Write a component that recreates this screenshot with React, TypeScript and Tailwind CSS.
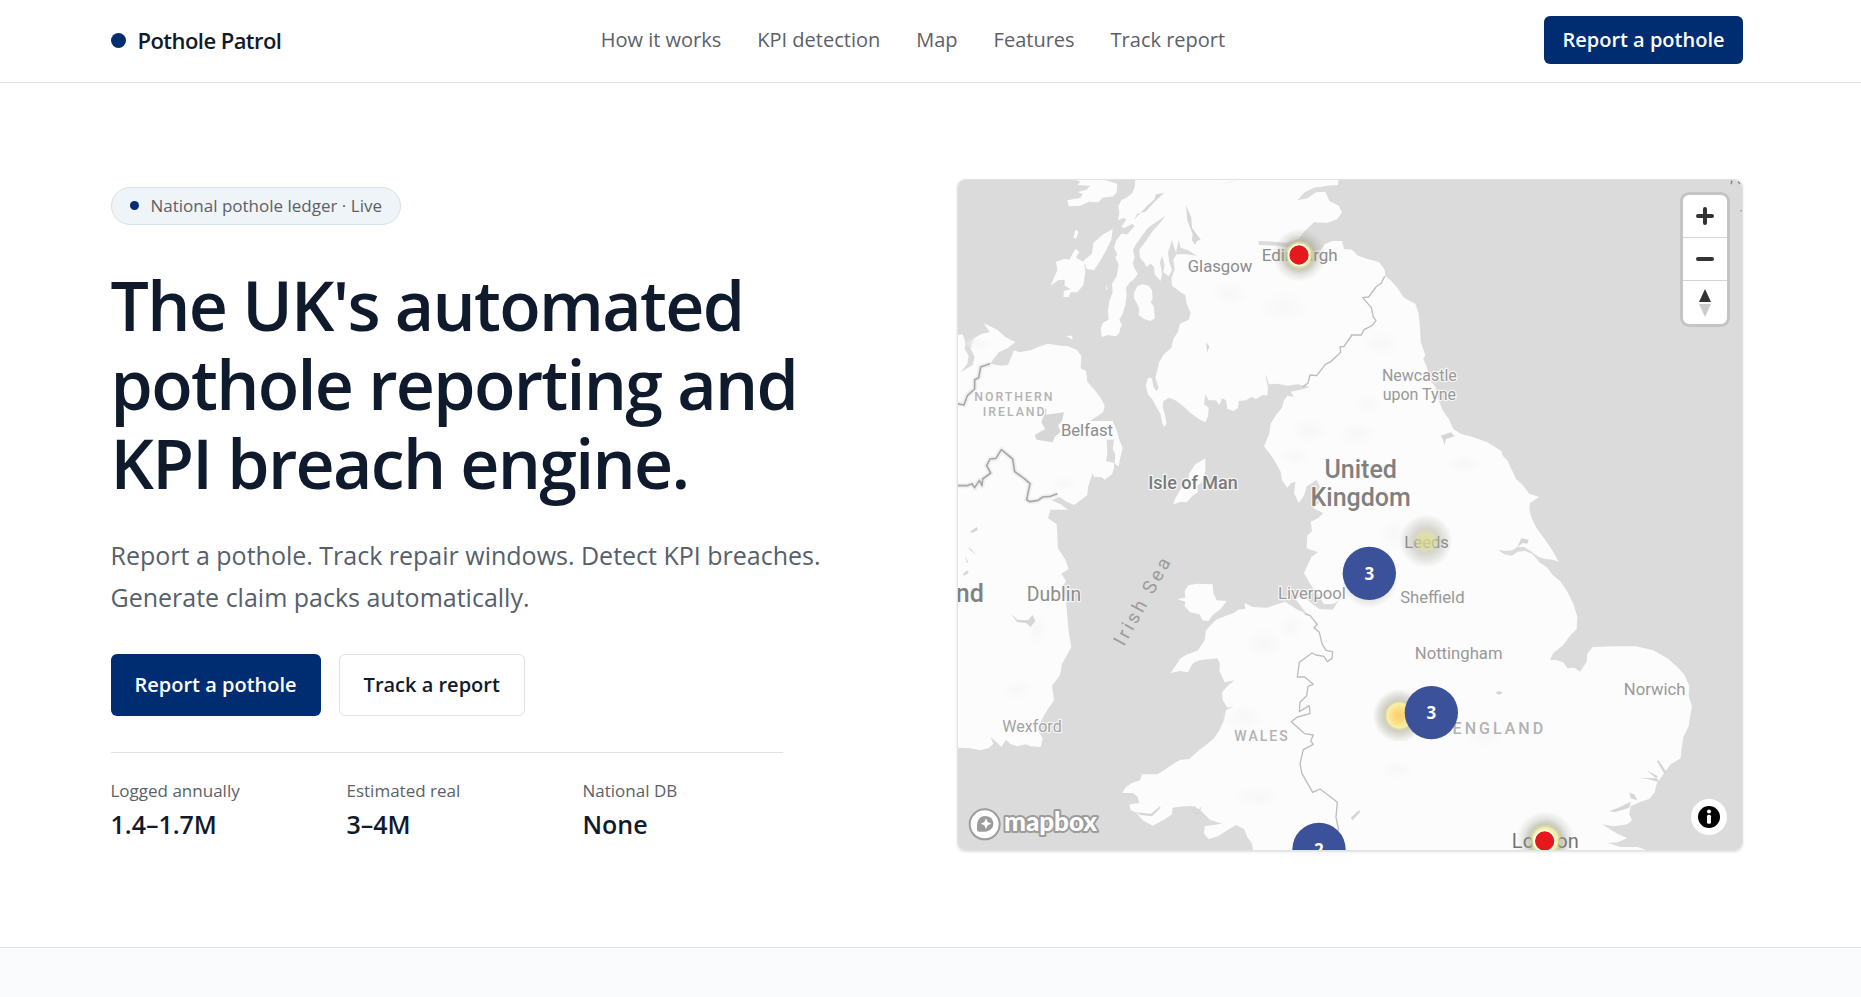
import React from 'react';

interface MapLabel {
  text: string;
  x: number;
  y: number;
  size: number;
  fill: string;
  spacing?: number;
  weight?: number;
}

const navLinks = ['How it works', 'KPI detection', 'Map', 'Features', 'Track report'];

const stats = [
  { label: 'Logged annually', value: '1.4–1.7M' },
  { label: 'Estimated real', value: '3–4M' },
  { label: 'National DB', value: 'None' },
];

// Land masses, in map units (3 units per pixel at full size)
const land = [
  // Great Britain
  'M555 10 L552 50 545 68 528 82 512 90 503 108 506 128 502 150 520 142 527 148 512 168 520 174 545 160 552 168 530 192 512 190 496 212 490 232 500 252 494 262 504 282 498 318 484 340 486 366 476 392 472 420 474 448 456 458 450 476 453 500 472 494 496 498 506 488 508 474 514 466 506 448 516 430 524 404 528 372 526 352 538 336 548 328 562 310 552 296 546 278 552 262 547 240 556 222 574 196 592 172 612 158 645 136 630 156 606 182 590 206 566 238 568 262 580 276 588 290 600 280 610 290 612 312 630 332 634 310 628 276 634 256 642 284 638 306 654 318 664 300 656 276 652 246 664 210 670 230 676 246 684 208 690 232 712 240 740 256 706 252 678 252 668 268 672 296 662 326 664 346 690 366 704 374 708 400 720 428 714 448 688 460 682 484 668 506 662 532 640 552 626 574 620 600 614 622 624 652 618 662 608 650 604 624 592 622 585 646 592 672 606 688 616 708 630 732 634 756 640 770 648 760 642 730 636 712 638 692 656 682 674 690 696 706 720 728 748 748 764 756 772 738 774 712 760 702 764 672 774 690 796 690 806 704 814 684 826 690 830 716 850 722 862 712 864 692 886 690 902 680 916 686 936 674 950 676 952 654 944 612 950 624 954 642 980 640 1010 646 1040 642 1078 650 1050 658 1020 664 1030 680 1010 676 1000 690 994 712 976 734 960 760 956 790 940 828 956 848 970 868 990 904 994 930 1010 952 1022 938 1034 934 1030 968 1044 998 1060 976 1068 948 1084 938 1098 928 1108 950 1096 970 1106 996 1088 1014 1118 1028 1102 1044 1080 1054 1084 1082 1070 1096 1068 1134 1102 1146 1082 1160 1070 1186 1060 1208 1070 1226 1086 1252 1106 1278 1120 1302 1150 1300 1164 1290 1146 1318 1106 1316 1084 1300 1050 1272 1036 1288 1068 1330 1040 1318 1004 1294 980 1302 950 1312 906 1310 882 1298 884 1316 862 1318 850 1328 826 1336 796 1348 766 1380 762 1410 742 1440 706 1454 690 1464 676 1484 660 1508 688 1502 712 1506 718 1494 728 1478 746 1470 800 1464 808 1480 806 1502 822 1536 852 1530 830 1548 814 1566 816 1588 830 1612 850 1606 826 1620 820 1650 806 1680 790 1704 766 1724 742 1742 716 1766 690 1768 668 1780 640 1800 620 1812 574 1812 568 1830 544 1838 526 1850 514 1868 546 1868 560 1878 566 1898 536 1902 540 1920 556 1926 576 1950 606 1966 640 1948 664 1932 666 1912 700 1908 732 1908 754 1924 778 1948 814 1960 762 1968 760 1990 774 2006 802 1998 830 1980 856 1964 880 1976 890 2000 904 2020 910 2060 L2180 2060 2166 2048 2130 2040 2090 2040 2060 2030 2010 2030 1970 2018 2000 2016 2030 2004 2000 1990 1954 1962 1990 1968 2030 1962 2044 1950 2036 1932 2040 1908 2070 1894 2096 1886 2112 1866 2118 1840 2142 1806 2160 1782 2190 1764 2192 1740 2198 1700 2214 1668 2218 1640 2224 1610 2214 1576 2216 1546 2200 1512 2180 1490 2150 1464 2108 1440 2056 1428 1990 1428 1926 1430 1910 1450 1908 1474 1888 1504 1872 1492 1850 1494 1838 1476 1818 1470 1798 1468 1808 1448 1838 1424 1858 1396 1878 1376 1880 1340 1868 1300 1850 1264 1828 1232 1806 1214 1790 1192 1766 1176 1746 1152 1724 1142 1700 1144 1684 1156 1660 1152 1642 1138 1664 1142 1684 1140 1700 1130 1720 1130 1740 1142 1764 1160 1786 1166 1806 1168 1824 1174 1804 1138 1780 1104 1758 1074 1744 1046 1736 1018 1738 998 1766 980 1736 970 1716 944 1696 926 1684 900 1670 870 1656 856 1652 842 1610 816 1566 800 1530 790 1508 776 1494 746 1476 720 1464 690 1456 652 1438 630 1430 594 1418 566 1424 554 1410 514 1408 470 1404 430 1394 400 1370 388 1358 380 1340 352 1320 330 1304 318 1302 298 1286 276 1250 266 1222 256 1204 238 1180 236 1174 212 1146 212 1122 222 1110 240 1066 242 1020 232 980 226 926 224 922 212 970 214 1010 218 1044 206 1060 184 1090 156 1130 158 1160 146 1174 126 1164 106 1136 92 1124 64 1096 66 1070 84 1040 90 1062 66 1090 52 1130 46 1162 44 1164 10Z',
  // Ireland
  'M10 494 L36 492 44 516 42 536 54 556 50 580 30 606 66 584 72 560 60 536 70 504 94 490 118 486 98 458 140 478 164 500 194 516 170 534 144 546 118 580 150 586 172 584 190 540 206 546 240 540 268 528 292 520 330 526 352 528 378 538 392 556 390 594 406 602 410 634 436 664 450 682 462 706 458 724 440 738 418 752 454 752 486 752 498 780 506 810 516 832 508 866 504 888 492 880 494 852 486 836 490 808 468 808 470 850 466 872 490 878 490 894 484 912 462 928 452 920 430 920 426 908 412 950 410 974 392 988 370 1004 348 994 326 980 302 990 330 1002 352 1018 300 1018 292 1044 318 1062 322 1134 344 1168 354 1196 332 1210 346 1232 334 1250 346 1290 350 1340 354 1384 362 1430 344 1464 334 1480 328 1514 304 1546 310 1590 288 1622 272 1650 262 1680 276 1704 270 1730 240 1728 226 1722 200 1728 180 1722 166 1708 152 1730 138 1716 120 1700 128 1720 116 1732 88 1740 60 1734 10 1732Z',
  // Mull
  'M372 28 L460 28 500 40 498 66 488 78 456 82 442 96 414 94 390 106 354 108 350 90 390 82 396 70 380 66 408 58 418 46 380 44 390 34Z',
  // Islay
  'M374 236 L386 244 376 262 400 276 404 304 398 344 380 366 360 366 354 380 338 380 340 362 360 356 342 346 342 328 322 330 300 346 312 318 320 300 316 274 340 266 356 268Z',
  // Jura
  'M486 176 L482 208 466 240 452 266 430 300 408 296 398 272 424 250 428 218 458 192Z',
  // Small isles
  'M374 178 L384 184 376 206 368 202Z',
  'M468 340 L470 360 466 356Z',
  'M346 496 L364 496 366 508Z',
  // Arran
  'M574 342 L594 346 604 360 606 386 600 394 610 410 612 444 600 452 580 446 564 434 566 416 560 402 550 384 550 366 560 348Z',
  // Isle of Man
  'M764 864 L734 882 716 908 712 930 690 956 674 984 668 1002 690 994 708 996 724 978 742 966 740 946 756 934 764 900Z',
  // Anglesey
  'M680 1286 L704 1282 702 1262 714 1244 742 1240 786 1242 788 1268 798 1290 828 1292 810 1316 786 1334 774 1352 756 1350 746 1332 718 1326 702 1308 704 1294Z',
];

// Lochs, loughs and inlets cut out of the land
const water = [
  'M706 104 L722 142 724 172 750 208 738 212 734 224 724 210 726 192 710 150Z',
  'M640 68 L612 94 584 124 560 130 550 148 590 106 612 86 616 72Z',
  'M280 734 L340 726 334 752 322 766 330 784 312 800 306 816 258 808 252 794 284 776 272 756Z',
  'M284 714 L288 716 286 736 282 732Z',
  'M800 46 L838 34 866 28 820 40Z',
  'M766 516 L776 528 770 546 768 534Z',
  'M58 1084 L78 1070 82 1078 64 1088Z',
  'M48 1132 L62 1136 76 1154 60 1140Z',
  'M36 1212 L50 1200 54 1208 40 1216Z',
  'M42 1156 L54 1178 48 1176Z',
  'M180 1330 L200 1348 232 1350 246 1334 254 1352 240 1370 226 1358 200 1356Z',
  'M1700 1130 L1712 1104 1734 1108 1730 1120 1716 1118Z',
  'M1634 1566 L1648 1562 1656 1568 1644 1574Z',
  'M2118 1772 L2124 1770 2148 1806 2142 1812Z',
  'M2064 1822 L2120 1824 2126 1836 2090 1826Z',
  'M2088 1800 L2122 1818 2116 1824Z',
  'M2036 1866 L2052 1874 2060 1890 2040 1884Z',
  'M1976 1922 L2000 1914 2040 1894 2036 1912 1992 1926Z',
  'M1200 1942 L1226 1918 1228 1926 1206 1950Z',
  'M556 1926 L600 1930 626 1910 618 1900 630 1912 604 1938 570 1934Z',
  'M716 1904 L738 1926 754 1906 740 1940Z',
  'M1470 796 L1500 786 1512 798 1486 806 1482 824 1476 806Z',
];

const borders = [
  'M1204 494 L1180 528 1168 530 1170 546 1140 574 1124 582 1098 616 1078 614 1072 638 1056 650',
  'M1200 494 L1232 494 1240 478 1264 466 1276 450 1268 440 1262 412 1236 382 1254 380 1276 350 1292 338 1302 318',
  'M1062 1330 L1078 1336 1100 1362 1090 1372 1106 1386 1114 1420 1126 1440 1146 1444 1144 1464 1130 1474 1120 1458 1096 1454 1084 1448 1046 1476 1040 1520 1062 1520 1088 1542 1072 1548 1068 1576 1048 1596 1046 1624 1076 1606 1078 1630 1040 1640 1022 1654 1062 1690 1088 1694 1080 1712 1088 1722 1058 1738 1048 1780 1054 1810 1086 1866 1108 1856 1140 1880 1160 1896 1156 1940 1164 1980',
];

const irishBorders = [
  'M10 698 L40 704 50 676 72 656 72 628 84 622 90 590 118 580',
  'M22 946 L50 946 64 940 72 952 86 930 94 946 96 926 120 908 108 886 118 866 136 864 152 838 186 866 192 904 220 924 238 940 228 988 238 994 262 990 276 980 300 978 320 970',
];

// Faint relief tint on high ground
const relief = [
  [840, 370, 60, 40], [1000, 410, 80, 50], [1290, 520, 60, 40], [1250, 700, 50, 30], [1080, 780, 60, 40],
  [1030, 860, 50, 30], [1540, 880, 60, 30], [1220, 790, 60, 40], [940, 1420, 60, 50], [1020, 1370, 40, 40],
  [880, 1640, 70, 40], [920, 1880, 80, 30], [260, 1380, 30, 50], [200, 1560, 50, 30], [1330, 1090, 50, 50],
  [1500, 1280, 50, 30], [340, 940, 40, 20], [80, 520, 40, 20], [1600, 1700, 60, 30], [1340, 1800, 50, 30],
];

const labels: MapLabel[] = [
  { text: 'Edinburgh', x: 1047, y: 271, size: 51, fill: '#8c8c8c' },
  { text: 'Glasgow', x: 808, y: 306, size: 50, fill: '#8c8c8c' },
  { text: 'NORTHERN', x: 191, y: 693, size: 37, fill: '#b3b3b3', spacing: 6, weight: 500 },
  { text: 'IRELAND', x: 192, y: 738, size: 37, fill: '#b3b3b3', spacing: 6, weight: 500 },
  { text: 'Belfast', x: 409, y: 797, size: 50, fill: '#8c8c8c' },
  { text: 'Isle of Man', x: 727, y: 957, size: 54, fill: '#7a7a7a', weight: 500 },
  { text: 'United', x: 1230, y: 922, size: 75, fill: '#808080', weight: 500 },
  { text: 'Kingdom', x: 1230, y: 1008, size: 75, fill: '#808080', weight: 500 },
  { text: 'Newcastle', x: 1406, y: 633, size: 48, fill: '#999999' },
  { text: 'upon Tyne', x: 1406, y: 690, size: 48, fill: '#999999' },
  { text: 'Leeds', x: 1428, y: 1133, size: 50, fill: '#8c8c8c' },
  { text: 'Sheffield', x: 1445, y: 1299, size: 50, fill: '#999999' },
  { text: 'Liverpool', x: 1084, y: 1287, size: 50, fill: '#999999' },
  { text: 'Nottingham', x: 1524, y: 1466, size: 50, fill: '#999999' },
  { text: 'Norwich', x: 2112, y: 1574, size: 50, fill: '#999999' },
  { text: 'Dublin', x: 310, y: 1291, size: 58, fill: '#8c8c8c' },
  { text: 'Wexford', x: 244, y: 1686, size: 48, fill: '#a3a3a3' },
  { text: 'WALES', x: 934, y: 1712, size: 42, fill: '#b3b3b3', spacing: 6, weight: 500 },
  { text: 'ENGLAND', x: 1646, y: 1690, size: 48, fill: '#b3b3b3', spacing: 9, weight: 500 },
  { text: 'Ireland', x: -16, y: 1294, size: 75, fill: '#808080', weight: 500 },
  { text: 'London', x: 1784, y: 2033, size: 60, fill: '#737373' },
];

const clusters = [
  { x: 1256, y: 1209, count: 3 },
  { x: 1442, y: 1627, count: 3 },
  { x: 1105, y: 2037, count: 2 },
];

const UkMap = () => (
  <svg
    viewBox="22 29 2352 2010"
    preserveAspectRatio="xMidYMid slice"
    className="block h-full w-full bg-[#dbdbdb]"
    role="img"
    aria-label="Map of reported potholes in the United Kingdom"
  >
    <defs>
      <radialGradient id="hot">
        <stop offset="0" stopColor="#f7ee6c" />
        <stop offset="0.42" stopColor="#f4f3a0" stopOpacity="0.95" />
        <stop offset="0.56" stopColor="#9a9a80" stopOpacity="0.5" />
        <stop offset="0.75" stopColor="#8c8c80" stopOpacity="0.2" />
        <stop offset="1" stopColor="#8c8c80" stopOpacity="0" />
      </radialGradient>
      <radialGradient id="warm">
        <stop offset="0" stopColor="#dcdb8a" stopOpacity="0.85" />
        <stop offset="0.35" stopColor="#cfcf98" stopOpacity="0.7" />
        <stop offset="0.55" stopColor="#9c9c90" stopOpacity="0.35" />
        <stop offset="1" stopColor="#8c8c80" stopOpacity="0" />
      </radialGradient>
      <radialGradient id="core">
        <stop offset="0" stopColor="#fdcb72" />
        <stop offset="0.25" stopColor="#fddc80" />
        <stop offset="0.46" stopColor="#f7f1a4" />
        <stop offset="0.58" stopColor="#a3a388" stopOpacity="0.5" />
        <stop offset="1" stopColor="#8c8c80" stopOpacity="0" />
      </radialGradient>
      <radialGradient id="tint">
        <stop offset="0" stopColor="#f7f7f7" />
        <stop offset="1" stopColor="#f7f7f7" stopOpacity="0" />
      </radialGradient>
    </defs>

    <g fill="#fcfcfc">
      {land.map((d) => <path key={d.slice(0, 20)} d={d} />)}
    </g>
    {relief.map(([cx, cy, rx, ry]) => (
      <ellipse key={`${cx}-${cy}`} cx={cx} cy={cy} rx={rx} ry={ry} fill="url(#tint)" />
    ))}
    <g fill="#d6d6d6">
      {water.map((d) => <path key={d.slice(0, 20)} d={d} />)}
    </g>
    <g fill="none" stroke="#bdbdbd" strokeWidth="4" strokeLinejoin="round">
      {borders.map((d) => <path key={d.slice(0, 20)} d={d} />)}
    </g>
    <g fill="none" strokeLinejoin="round">
      {irishBorders.map((d) => (
        <React.Fragment key={d.slice(0, 20)}>
          <path d={d} stroke="#f0f0f0" strokeWidth="16" />
          <path d={d} stroke="#a8a8a8" strokeWidth="5" />
        </React.Fragment>
      ))}
    </g>
    <path d="M2340 32 l4 2 -3 8 M2362 34 l6 6 M2370 120 l3 3" stroke="#8a8a8a" strokeWidth="4" fill="none" />

    <g fontFamily="Roboto, sans-serif" textAnchor="middle" stroke="#fcfcfc" strokeOpacity="0.85" strokeWidth="7" strokeLinejoin="round" paintOrder="stroke">
      {labels.map((l) => (
        <text key={l.text} x={l.x} y={l.y} fontSize={l.size} fill={l.fill} fontWeight={l.weight || 400} letterSpacing={l.spacing || 0}>
          {l.text}
        </text>
      ))}
    </g>
    <text transform="translate(520 1430) rotate(-61)" fontFamily="Roboto, sans-serif" fontSize="57" letterSpacing="9" fill="#9c9c9c">
      Irish Sea
    </text>

    <circle cx="1046" cy="254" r="80" fill="url(#hot)" />
    <circle cx="1426" cy="1112" r="80" fill="url(#warm)" />
    <circle cx="1346" cy="1636" r="80" fill="url(#core)" />
    <circle cx="1256" cy="1230" r="84" fill="url(#warm)" />
    <circle cx="1784" cy="2010" r="88" fill="url(#hot)" />

    {[[1045, 254], [1782, 2012]].map(([cx, cy]) => (
      <circle key={cx} cx={cx} cy={cy} r="31" fill="#e5181b" stroke="#fff" strokeWidth="4" />
    ))}
    {clusters.map((c) => (
      <g key={`${c.x}-${c.y}`}>
        <circle cx={c.x} cy={c.y} r="80" fill="#3b529a" />
        <text x={c.x} y={c.y + 19} textAnchor="middle" fontFamily="Open Sans, sans-serif" fontWeight="700" fontSize="51" fill="#fff">
          {c.count}
        </text>
      </g>
    ))}

    {/* Map provider mark */}
    <g>
      <circle cx="102" cy="1962" r="45" fill="#fff" stroke="#9c9c9c" strokeWidth="6" />
      <path d="M80 1983 C76 1958 82 1937 104 1937 C119 1937 128 1948 128 1960 C128 1981 104 1988 80 1983Z" fill="#9c9c9c" />
      <path d="M106 1944 l5 11 11 5 -11 5 -5 11 -5 -11 -11 -5 11 -5Z" fill="#fff" />
      <text x="160" y="1983" fontFamily="Lato, sans-serif" fontWeight="900" fontSize="78" fill="#fff" stroke="#9c9c9c" strokeWidth="12" strokeLinejoin="round" paintOrder="stroke">
        mapbox
      </text>
    </g>
  </svg>
);

const MapControls = () => (
  <div className="absolute right-[15px] top-[15px] flex flex-col overflow-hidden rounded-md bg-white ring-3 ring-black/10 divide-y divide-[#d4d4d4]">
    <button type="button" aria-label="Zoom in" className="grid h-[43px] w-11 place-items-center">
      <svg viewBox="0 0 20 20" className="h-5 w-5" stroke="#333" strokeWidth="4" strokeLinecap="round">
        <path d="M3 10h14M10 3v14" />
      </svg>
    </button>
    <button type="button" aria-label="Zoom out" className="grid h-[43px] w-11 place-items-center">
      <svg viewBox="0 0 20 20" className="h-5 w-5" stroke="#333" strokeWidth="4" strokeLinecap="round">
        <path d="M3 10h14" />
      </svg>
    </button>
    <button type="button" aria-label="Reset bearing to north" className="grid h-[43px] w-11 place-items-center">
      <svg viewBox="0 0 28 28" className="h-7 w-7">
        <path d="M14 0 L20 13 H8Z" fill="#333" />
        <path d="M14 28 L8 15 H20Z" fill="#ccc" />
      </svg>
    </button>
  </div>
);

const App: React.FC = () => {
  return (
    <div className="min-h-screen bg-[#fafbfd] font-['Open_Sans',sans-serif] text-[#0f1b2d]">
      <header className="border-b border-[#dfe3e6] bg-white pr-2">
        <div className="mx-auto flex h-[82px] max-w-[1632px] items-center justify-between pb-0.5">
          <a href="#" className="flex items-center gap-3 text-[22px] font-semibold tracking-tight">
            <span className="h-[15px] w-[15px] rounded-full bg-[#002d72]" />
            Pothole Patrol
          </a>
          <nav className="flex items-center gap-9 text-[20px] text-[#5b6168]">
            {navLinks.map((link) => (
              <a key={link} href="#">{link}</a>
            ))}
          </nav>
          <button type="button" className="h-12 rounded-md bg-[#002d72] px-[18px] text-[20px] font-semibold text-white">
            Report a pothole
          </button>
        </div>
      </header>

      <main className="border-b border-[#dfe3e6] bg-white pr-2">
        <div className="mx-auto grid max-w-[1632px] grid-cols-2 items-center gap-[60px] py-24">
          <div>
            <div className="inline-flex h-[38px] items-center gap-3 rounded-full border border-[#d9e2e8] bg-[#eff4f8] px-[18px] text-[17px] text-[#5b6168]">
              <span className="h-[9px] w-[9px] rounded-full bg-[#002d72]" />
              National pothole ledger · Live
            </div>

            <h1 className="mt-10 text-[68px] font-semibold leading-[79px] tracking-tight">
              The UK's automated
              <br />
              pothole reporting and
              <br />
              KPI breach engine.
            </h1>

            <p className="mt-8 text-[25px] leading-[42px] text-[#56606b]">
              Report a pothole. Track repair windows. Detect KPI breaches.
              <br />
              Generate claim packs automatically.
            </p>

            <div className="mt-9 flex gap-[18px] text-[20px] font-semibold">
              <button type="button" className="h-[62px] rounded-md bg-[#002d72] px-6 text-white">
                Report a pothole
              </button>
              <button type="button" className="h-[62px] rounded-md border border-[#dfe3e6] bg-white px-6">
                Track a report
              </button>
            </div>

            <dl className="mt-9 grid max-w-[672px] grid-cols-3 gap-9 border-t border-[#dfe3e6] pt-6">
              {stats.map((s) => (
                <div key={s.label}>
                  <dt className="text-[17px] leading-[27px] text-[#5b6168]">{s.label}</dt>
                  <dd className="text-[25px] font-semibold leading-[40px]">{s.value}</dd>
                </div>
              ))}
            </dl>
          </div>

          <div className="relative h-[672px] overflow-hidden rounded-lg border border-[#dfe3e6] shadow-sm">
            <UkMap />
            <MapControls />
            <button
              type="button"
              aria-label="Map attribution"
              className="absolute bottom-[15px] right-[15px] grid h-9 w-9 place-items-center rounded-full bg-white"
            >
              <svg viewBox="0 0 22 22" className="h-[22px] w-[22px]">
                <circle cx="11" cy="11" r="11" />
                <circle cx="11" cy="5.5" r="2" fill="#fff" />
                <rect x="9" y="8.8" width="4" height="9" rx="1.5" fill="#fff" />
              </svg>
            </button>
          </div>
        </div>
      </main>
    </div>
  );
};

export default App;
